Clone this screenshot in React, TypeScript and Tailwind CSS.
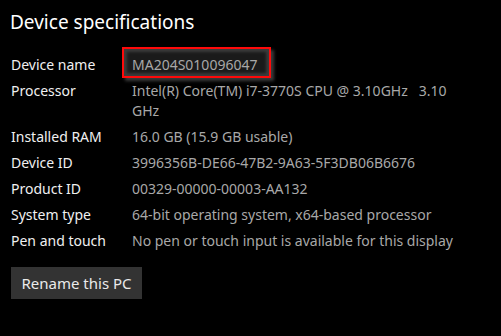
import React from 'react';

const specs: { label: string; value: React.ReactNode }[] = [
  { label: 'Processor', value: <>Intel(R) Core(TM) i7-3770S CPU @ 3.10GHz&nbsp;&nbsp;&nbsp;3.10<br />GHz</> },
  { label: 'Installed RAM', value: '16.0 GB (15.9 GB usable)' },
  { label: 'Device ID', value: '3996356B-DE66-47B2-9A63-5F3DB06B6676' },
  { label: 'Product ID', value: '00329-00000-00003-AA132' },
  { label: 'System type', value: '64-bit operating system, x64-based processor' },
  { label: 'Pen and touch', value: 'No pen or touch input is available for this display' },
];

export default function App() {
  return (
    <div
      className="w-[501px] h-[336px] bg-black overflow-hidden pl-[11px] pt-[8px]"
      style={{ fontFamily: '"Noto Sans", "Open Sans", sans-serif' }}
    >
      <h2 className="text-[19px] leading-[28px] text-white -ml-[1px]">Device specifications</h2>

      <div className="mt-[16px] flex flex-col text-[14px] leading-[20px]">
        <div className="flex py-[3px]">
          <div className="w-[121px] text-[#f0f0f0]">Device name</div>
          <div className="relative text-[#a8a8a8]">
            <div className="absolute -left-[10px] -top-[8px] w-[149px] h-[31px] border-2 border-[#ff0a0a] bg-[#1a1a1a] shadow-[inset_0_0_3px_3px_#3c3c3c,3px_3px_3px_#3a3a3a]" />
            <span className="relative">MA204S010096047</span>
          </div>
        </div>
        {specs.map((s, i) => (
          <div key={i} className="flex py-[3px]">
            <div className="w-[121px] text-[#f0f0f0]">{s.label}</div>
            <div className="text-[#a8a8a8]">{s.value}</div>
          </div>
        ))}
      </div>

      <button className="mt-[13px] w-[131px] h-[32px] bg-[#333333] text-[#eaeaea] text-[15px]">
        Rename this PC
      </button>
    </div>
  );
}
